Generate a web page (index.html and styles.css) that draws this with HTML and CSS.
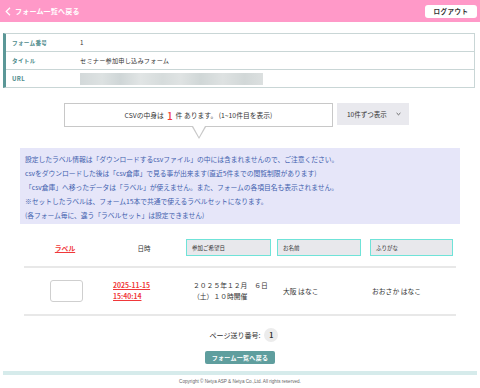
FILE: index.html
```html
<!DOCTYPE html>
<html lang="ja">
<head>
<meta charset="utf-8">
<title>CSV</title>
<link rel="stylesheet" href="styles.css">
</head>
<body>
<header class="topbar">
  <a class="back" href="#">
    <svg class="back-icon" width="6" height="9" viewBox="0 0 6 9"><path d="M5 0.8 L1.2 4.5 L5 8.2" fill="none" stroke="#fff" stroke-width="1.2"/></svg>
    <span>フォーム一覧へ戻る</span>
  </a>
  <button class="logout">ログアウト</button>
</header>

<section class="info-table">
  <div class="info-row"><div class="info-label">フォーム番号</div><div class="info-value">1</div></div>
  <div class="info-row"><div class="info-label">タイトル</div><div class="info-value">セミナー参加申し込みフォーム</div></div>
  <div class="info-row"><div class="info-label url-label">URL</div><div class="info-value"><div class="blur-url"></div></div></div>
</section>

<section class="counter">
  <div class="bubble">CSVの中身は <span class="count">1</span> 件 あります。 (1~10件目を表示)</div>
  <div class="per-page">10件ずつ表示
    <svg width="5" height="4" viewBox="0 0 5 4"><path d="M0.6 1 L2.5 2.8 L4.4 1" fill="none" stroke="#555" stroke-width="0.9"/></svg>
  </div>
</section>

<section class="notice">
  <p>設定したラベル情報は「ダウンロードするcsvファイル」の中には含まれませんので、ご注意ください。</p>
  <p>csvをダウンロードした後は「csv倉庫」で見る事が出来ます(直近5件までの閲覧制限があります)</p>
  <p>「csv倉庫」へ移ったデータは「ラベル」が使えません。また、フォームの各項目名も表示されません。</p>
  <p>※セットしたラベルは、フォーム15本で共通で使えるラベルセットになります。</p>
  <p>(各フォーム毎に、違う「ラベルセット」は設定できません)</p>
</section>

<section class="data">
  <div class="data-head">
    <div class="col c1"><a class="red-link" href="#">ラベル</a></div>
    <div class="col c2 center">日時</div>
    <div class="col c3"><div class="field">参加ご希望日</div></div>
    <div class="col c4"><div class="field">お名前</div></div>
    <div class="col c5"><div class="field">ふりがな</div></div>
  </div>
  <div class="data-row">
    <div class="col c1"><div class="label-box"></div></div>
    <div class="col c2"><a class="red-link date" href="#">2025-11-15<br>15:40:14</a></div>
    <div class="col c3 event">２０２５年１２月　６日<br>（土）１０時開催</div>
    <div class="col c4 name">大阪 はなこ</div>
    <div class="col c5 name">おおさか はなこ</div>
  </div>
</section>

<div class="pager">ページ送り番号: <span class="page-num">1</span></div>
<div class="back-row"><button class="back-btn">フォーム一覧へ戻る</button></div>

<footer class="footer">
  <div class="footer-bar"></div>
  <p class="copy">Copyright © Netya ASP &amp; Netya Co.,Ltd. All rights reserved.</p>
</footer>
</body>
</html>
```
FILE: styles.css
```css
* { box-sizing: border-box; }
html, body { margin: 0; padding: 0; }
body {
  width: 480px;
  background: #fff;
  font-family: "Noto Sans CJK JP", "Noto Sans", sans-serif;
  color: #333;
}
p { margin: 0; }

.topbar {
  height: 22px;
  background: #ff99c8;
  display: flex;
  align-items: center;
  justify-content: space-between;
  padding: 0 3px 0 5px;
}
.back {
  display: flex;
  align-items: center;
  gap: 4px;
  color: #fff;
  font-weight: bold;
  font-size: 7px;
  text-decoration: none;
  letter-spacing: 0.2px;
}
.logout {
  width: 52px;
  height: 13px;
  padding: 0;
  background: #fff;
  border: 0;
  border-radius: 3px;
  font-family: inherit;
  font-size: 6.5px;
  font-weight: bold;
  color: #333;
  letter-spacing: 0.5px;
}

.info-table {
  margin: 11px 5px 0 3px;
  border: 1px solid #c9d6d6;
  border-left: 3px solid #5b9797;
}
.info-row {
  display: flex;
  align-items: center;
  height: 18px;
  border-bottom: 1px solid #c9d6d6;
}
.info-row:last-child { border-bottom: 0; height: 17px; }
.info-label {
  width: 74px;
  padding-left: 6px;
  font-size: 5.6px;
  color: #4f8c8c;
  letter-spacing: 0.3px;
  font-weight: bold;
}
.url-label { font-size: 6px; }
.info-value {
  font-size: 6.2px;
  color: #333;
  letter-spacing: 0.2px;
}
.blur-url {
  width: 183px;
  height: 12px;
  background:
    linear-gradient(90deg, #d3d9da 0, #dde2e2 12%, #cfd6d7 22%, #e1e5e5 33%, #d6dcdc 45%, #dfe3e3 55%, #d0d7d7 66%, #dee2e2 78%, #d2d8d8 90%, #dce0e0 100%);
  filter: blur(0.6px);
}

.counter {
  display: flex;
  align-items: flex-start;
  gap: 4px;
  margin: 15px 0 0 64px;
}
.bubble {
  position: relative;
  width: 269px;
  height: 24px;
  border: 1px solid #c8c8c8;
  display: flex;
  align-items: center;
  justify-content: center;
  font-size: 6.8px;
  color: #333;
}
.count {
  color: #f0383a;
  font-size: 10px;
  margin: 0 3px;
  font-weight: 500;
}
.bubble::before,
.bubble::after {
  content: "";
  position: absolute;
  left: 50%;
  width: 0;
  height: 0;
  border-style: solid;
}
.bubble::before {
  top: 23px;
  margin-left: -7px;
  border-width: 12px 7px 0 7px;
  border-color: #c8c8c8 transparent transparent transparent;
}
.bubble::after {
  top: 22px;
  margin-left: -6px;
  border-width: 11px 6px 0 6px;
  border-color: #fff transparent transparent transparent;
}
.per-page {
  width: 72px;
  height: 22px;
  background: #e9e9ee;
  display: flex;
  align-items: center;
  justify-content: space-between;
  padding: 0 8px 0 10px;
  font-size: 6.5px;
  color: #333;
}

.notice {
  margin: 21px 20px 0 20px;
  background: #e6e6f9;
  padding: 4px 5px 2px 5px;
  color: #3f5fae;
  font-size: 6.8px;
  line-height: 14px;
  letter-spacing: -0.05px;
}

.data {
  margin: 15px 24px 0 24px;
}
.data-head,
.data-row {
  display: flex;
  align-items: center;
  border-bottom: 2px solid #e8e8e8;
}
.data-head { padding-bottom: 10px; }
.data-row { height: 48px; }
.col { font-size: 6.5px; }
.c1 { width: 82px; display: flex; justify-content: center; }
.c2 { width: 78px; }
.c3 { width: 91px; }
.c4 { width: 91px; }
.c5 { width: 90px; }
.center { text-align: center; }
.data-head .c2 { padding-right: 2px; }
.field {
  margin-left: 2px;
  width: 85px;
  height: 17px;
  border: 1px solid #6fe3d8;
  background: #e8e8ec;
  font-size: 5.5px;
  color: #333;
  display: flex;
  align-items: center;
  padding-left: 5px;
}
.data-head .c4 .field { margin-left: 2px; width: 84px; }
.data-head .c5 .field { margin-left: 4px; width: 83px; }
.red-link {
  color: #f0383a;
  font-weight: bold;
  font-size: 6.8px;
  text-decoration: underline;
}
.label-box {
  width: 33px;
  height: 22px;
  border: 1px solid #cfcfcf;
  border-radius: 3px;
  margin-left: 2px;
}
.data-row .c2 { padding-left: 7px; }
.date { line-height: 11px; display: inline-block; }
.event {
  padding-left: 9px;
  font-size: 6.8px;
  line-height: 11px;
}
.name { font-size: 6.8px; padding-left: 8px; }
.data-row .c5 { padding-left: 6px; }

.pager {
  margin-top: 12px;
  display: flex;
  align-items: center;
  justify-content: center;
  gap: 4px;
  font-size: 7px;
  color: #333;
  padding-left: 8px;
}
.page-num {
  width: 14px;
  height: 14px;
  border-radius: 50%;
  background: #ececec;
  display: flex;
  align-items: center;
  justify-content: center;
  font-weight: bold;
  font-size: 7px;
}
.back-row {
  display: flex;
  justify-content: center;
  margin-top: 9px;
}
.back-btn {
  width: 70px;
  height: 13px;
  padding: 0;
  border: 0;
  border-radius: 2px;
  background: #5f9e9e;
  color: #fff;
  font-family: inherit;
  font-size: 6px;
  font-weight: bold;
  letter-spacing: 0.3px;
}

.footer { margin-top: 7px; }
.footer-bar {
  margin: 0 3px;
  height: 4px;
  background: #d6ebeb;
}
.copy {
  text-align: center;
  font-size: 4.6px;
  color: #666;
  margin-top: 4px;
  font-family: "Liberation Sans", "Noto Sans CJK JP", sans-serif;
}
```
